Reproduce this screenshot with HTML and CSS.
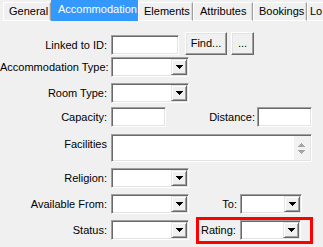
FILE: index.html
```html
<!DOCTYPE html>
<html>
<head>
<meta charset="utf-8">
<link rel="stylesheet" href="styles.css">
</head>
<body>
<div class="window">
  <div class="tabs">
    <div class="tab-lead"></div>
    <div class="tab w-general">General</div>
    <div class="tab active w-acc">Accommodation</div>
    <div class="tab w-el">Elements</div>
    <div class="tab w-at">Attributes</div>
    <div class="tab w-bk">Bookings</div>
    <div class="tab w-lo">Lo</div>
  </div>
  <div class="panel">
    <div class="row r1">
      <div class="lbl">Linked to ID:</div>
      <div class="edit w68"></div>
      <div class="btn find">Find...</div>
      <div class="btn dots">...</div>
    </div>
    <div class="row r2">
      <div class="lbl">Accommodation Type:</div>
      <div class="edit combo w78"><div class="drop"><svg width="7" height="4" viewBox="0 0 7 4"><path d="M0 0h7v1h-1v1h-1v1h-1v1h-1v-1h-1v-1h-1v-1h-1z"/></svg></div></div>
    </div>
    <div class="row r3">
      <div class="lbl">Room Type:</div>
      <div class="edit combo w78"><div class="drop"><svg width="7" height="4" viewBox="0 0 7 4"><path d="M0 0h7v1h-1v1h-1v1h-1v1h-1v-1h-1v-1h-1v-1h-1z"/></svg></div></div>
    </div>
    <div class="row r4">
      <div class="lbl">Capacity:</div>
      <div class="edit w55"></div>
      <div class="lbl2">Distance:</div>
      <div class="edit w55"></div>
    </div>
    <div class="row memo-row r5">
      <div class="lbl">Facilities</div>
      <div class="edit memo w201">
        <div class="vscroll"><svg width="16" height="24" viewBox="0 0 16 24"><path fill="#a6a6a6" d="M7 7h1v1h1v1h1v1h1v1h-7v-1h1v-1h1v-1h1z"/><path fill="#a6a6a6" d="M4 14h7v1h-1v1h-1v1h-1v1h-1v-1h-1v-1h-1v-1h-1z"/></svg></div>
      </div>
    </div>
    <div class="row r6">
      <div class="lbl">Religion:</div>
      <div class="edit combo w78"><div class="drop"><svg width="7" height="4" viewBox="0 0 7 4"><path d="M0 0h7v1h-1v1h-1v1h-1v1h-1v-1h-1v-1h-1v-1h-1z"/></svg></div></div>
    </div>
    <div class="row r7">
      <div class="lbl">Available From:</div>
      <div class="edit combo w78"><div class="drop"><svg width="7" height="4" viewBox="0 0 7 4"><path d="M0 0h7v1h-1v1h-1v1h-1v1h-1v-1h-1v-1h-1v-1h-1z"/></svg></div></div>
      <div class="lbl3">To:</div>
      <div class="edit combo w62"><div class="drop"><svg width="7" height="4" viewBox="0 0 7 4"><path d="M0 0h7v1h-1v1h-1v1h-1v1h-1v-1h-1v-1h-1v-1h-1z"/></svg></div></div>
    </div>
    <div class="row r8">
      <div class="lbl">Status:</div>
      <div class="edit combo w78"><div class="drop"><svg width="7" height="4" viewBox="0 0 7 4"><path d="M0 0h7v1h-1v1h-1v1h-1v1h-1v-1h-1v-1h-1v-1h-1z"/></svg></div></div>
      <div class="highlight">
        <div class="lbl4">Rating:</div>
        <div class="edit combo w61"><div class="drop"><svg width="7" height="4" viewBox="0 0 7 4"><path d="M0 0h7v1h-1v1h-1v1h-1v1h-1v-1h-1v-1h-1v-1h-1z"/></svg></div></div>
      </div>
    </div>
  </div>
</div>
</body>
</html>
```
FILE: styles.css
```css
html, body {
  margin: 0;
  padding: 0;
  background: #f0f0f0;
}
body {
  width: 323px;
  height: 247px;
  overflow: hidden;
  font-family: "Liberation Sans", Arial, sans-serif;
  font-size: 11px;
  color: #000;
}
.window {
  width: 323px;
  height: 247px;
  overflow: hidden;
}
.tabs {
  display: flex;
  align-items: flex-start;
  height: 21px;
  width: 323px;
  overflow: hidden;
  white-space: nowrap;
}
.tab-lead {
  width: 1px;
  margin-left: 2px;
  height: 21px;
  box-sizing: border-box;
  border-bottom: 1px solid #fff;
}
.tab {
  flex: none;
  box-sizing: border-box;
  height: 19px;
  margin-top: 2px;
  padding-left: 5px;
  line-height: 17px;
  border-top: 1px solid #fff;
  border-left: 1px solid #fff;
  border-right: 1px solid #a0a0a0;
  border-bottom: 1px solid #fff;
  box-shadow: inset -1px 0 #dadada;
  background: #f0f0f0;
  overflow: hidden;
}
.tab.active {
  height: 21px;
  margin-top: 0;
  padding-left: 7px;
  line-height: 18px;
  background: #3399ff;
  color: #fff;
  border: none;
  box-shadow: none;
}
.w-general { width: 48px; }
.w-acc { width: 87px; }
.w-el { width: 55px; }
.w-at { width: 60px; padding-left: 6px; }
.w-bk { width: 54px; padding-left: 5px; }
.w-lo { width: 16px; padding-left: 2px; border-right: none; box-shadow: none; }

.panel {
  display: flex;
  flex-direction: column;
}
.row {
  display: flex;
  align-items: flex-start;
  height: 20px;
  flex: none;
}
.r1 { margin-top: 14px; }
.r2 { margin-top: 2px; }
.r3 { margin-top: 6px; }
.r4 { margin-top: 4px; }
.r5 { margin-top: 7px; height: 28px; }
.r6 { margin-top: 6px; }
.r7 { margin-top: 6px; }
.r8 { margin-top: 6px; }

.lbl {
  width: 107px;
  margin-right: 4px;
  text-align: right;
  line-height: 20px;
  white-space: nowrap;
  flex: none;
}
.lbl2 {
  width: 89px;
  margin-right: 2px;
  text-align: right;
  line-height: 20px;
  flex: none;
}
.lbl3 {
  width: 48px;
  margin-right: 3px;
  text-align: right;
  line-height: 20px;
  flex: none;
}
.lbl4 {
  width: 39px;
  padding-left: 2px;
  line-height: 20px;
  flex: none;
  white-space: nowrap;
}

.edit {
  flex: none;
  box-sizing: border-box;
  height: 20px;
  background: #fff;
  border: 1px solid;
  border-color: #a0a0a0 #ffffff #ffffff #a0a0a0;
  box-shadow: inset 1px 1px #696969, inset -1px -1px #e3e3e3;
}
.w55 { width: 55px; }
.w61 { width: 61px; }
.w62 { width: 62px; }
.w68 { width: 68px; }
.w78 { width: 78px; }
.w201 { width: 201px; }

.combo {
  display: flex;
  justify-content: flex-end;
  align-items: stretch;
  padding: 1px;
}
.drop {
  width: 16px;
  box-sizing: border-box;
  background: #f0f0f0;
  border: 1px solid;
  border-color: #e3e3e3 #696969 #696969 #e3e3e3;
  box-shadow: inset 1px 1px #fff, inset -1px -1px #a0a0a0;
  display: flex;
  align-items: center;
  justify-content: center;
}
.drop svg {
  display: block;
  fill: #000;
}

.memo {
  height: 28px;
  display: flex;
  justify-content: flex-end;
  padding: 1px;
}
.vscroll {
  width: 16px;
  background: #f2f2f2;
  display: flex;
  align-items: flex-start;
}
.vscroll svg { display: block; }

.btn {
  flex: none;
  box-sizing: border-box;
  height: 23px;
  margin-top: -3px;
  background: #f0f0f0;
  border: 1px solid;
  border-color: #fff #696969 #696969 #fff;
  box-shadow: inset -1px -1px #a0a0a0, inset 1px 1px #e3e3e3;
  text-align: center;
  line-height: 21px;
}
.find { width: 42px; margin-left: 6px; }
.dots { width: 23px; margin-left: 4px; }

.highlight {
  flex: none;
  display: flex;
  align-items: flex-start;
  box-sizing: border-box;
  width: 117px;
  height: 27px;
  margin-top: -3px;
  margin-left: 7px;
  border: 3px solid #ff0000;
}
```
